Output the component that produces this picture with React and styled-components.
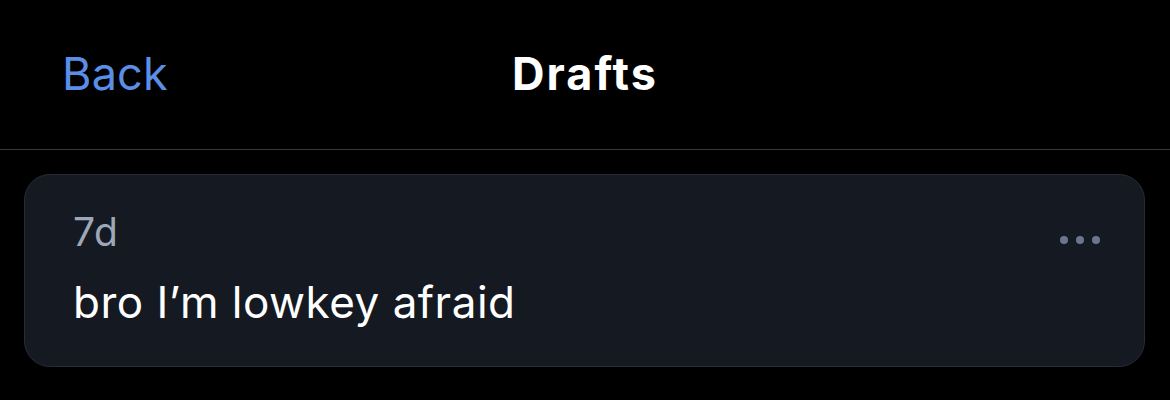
import React from 'react';
import styled, { createGlobalStyle } from 'styled-components';

const GlobalStyle = createGlobalStyle`
  html, body {
    margin: 0;
    padding: 0;
    background: #000;
  }
  body {
    font-family: Inter, "Noto Sans", sans-serif;
    -webkit-font-smoothing: antialiased;
  }
`;

const Screen = styled.div`
  width: 1170px;
  height: 400px;
  background: #000;
  overflow: hidden;
`;

const Header = styled.header`
  height: 150px;
  display: grid;
  grid-template-columns: 1fr auto 1fr;
  align-items: center;
  padding: 0 62px;
  box-sizing: border-box;
  border-bottom: 1px solid #34373e;
`;

const BackButton = styled.button`
  justify-self: start;
  background: none;
  border: 0;
  padding: 0;
  font-family: inherit;
  font-size: 45px;
  line-height: 1.21;
  letter-spacing: 0.2px;
  color: #5b8ee6;
  cursor: pointer;
`;

const Title = styled.h1`
  margin: 0;
  font-size: 45px;
  line-height: 1.21;
  font-weight: 700;
  letter-spacing: 2px;
  color: #fff;
`;

const List = styled.main`
  padding: 24px 25px 0 24px;
`;

const Card = styled.article`
  position: relative;
  height: 193px;
  box-sizing: border-box;
  background: #141922;
  border: 1px solid #272c35;
  border-radius: 26px;
  padding: 37px 48px 0;
  display: flex;
  flex-direction: column;
  align-items: flex-start;
  gap: 29px;
`;

const Age = styled.span`
  font-size: 39px;
  line-height: 39px;
  letter-spacing: 1px;
  color: #9ea7b8;
`;

const Body = styled.p`
  margin: 0;
  font-size: 44px;
  line-height: 44px;
  letter-spacing: 0.5px;
  color: #fff;
`;

const MoreButton = styled.button`
  position: absolute;
  top: 57px;
  right: 40px;
  display: flex;
  gap: 8px;
  background: none;
  border: 0;
  padding: 4px;
`;

const Dot = styled.span`
  width: 8px;
  height: 8px;
  border-radius: 50%;
  background: #6b7590;
`;

export default function App() {
  return (
    <Screen>
      <GlobalStyle />
      <Header>
        <BackButton>Back</BackButton>
        <Title>Drafts</Title>
        <span />
      </Header>
      <List>
        <Card>
          <Age>7d</Age>
          <Body>bro I’m lowkey afraid</Body>
          <MoreButton aria-label="More">
            <Dot />
            <Dot />
            <Dot />
          </MoreButton>
        </Card>
      </List>
    </Screen>
  );
}
